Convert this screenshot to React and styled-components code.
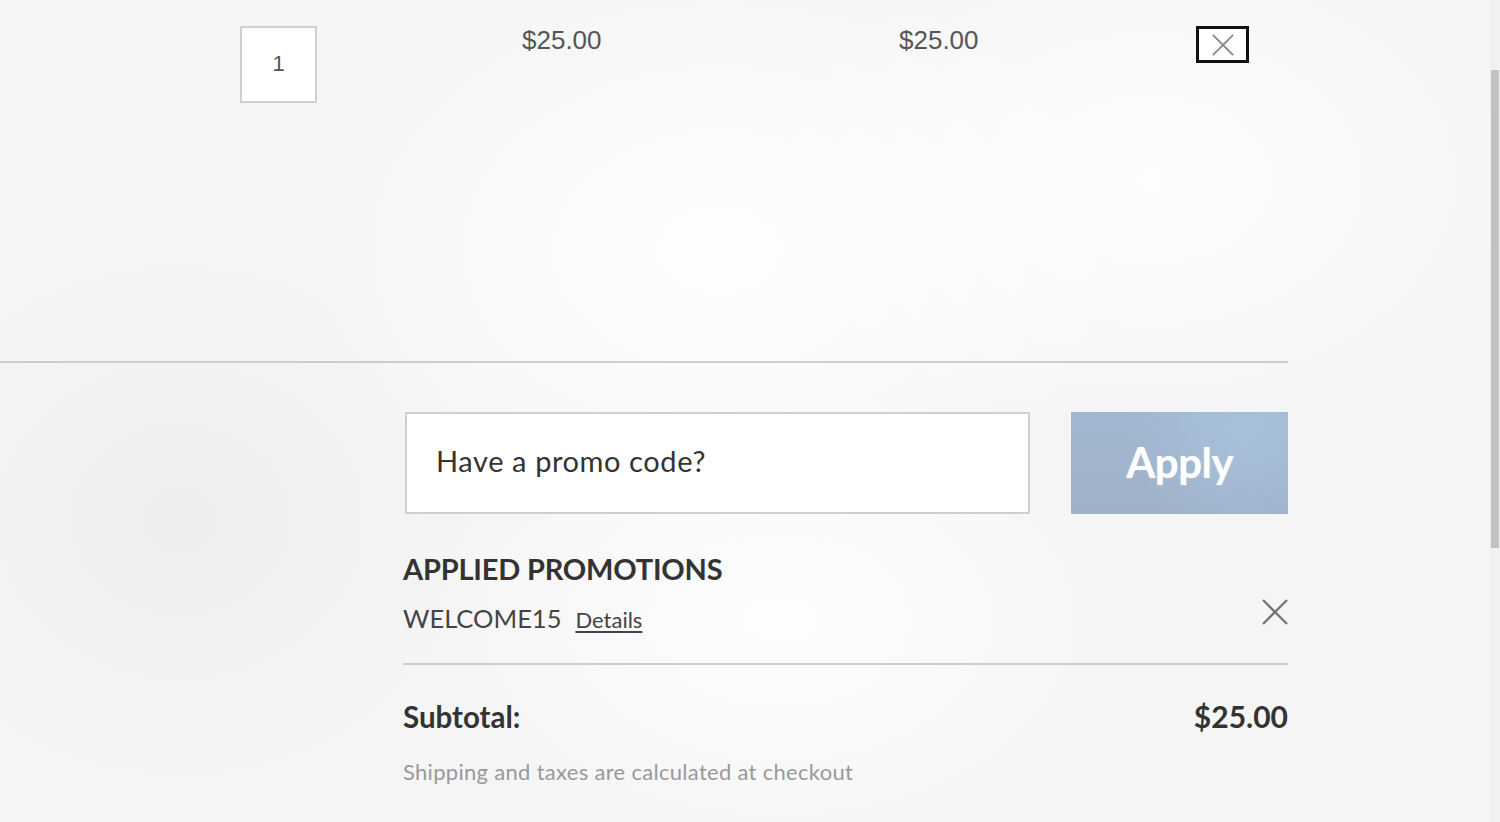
import React from 'react';
import styled, { createGlobalStyle } from 'styled-components';

const GlobalStyle = createGlobalStyle`
  html, body {
    margin: 0;
    padding: 0;
    height: 100%;
    overflow: hidden;
  }
  body {
    font-family: Lato, "Noto Sans", sans-serif;
    color: #333;
  }
`;

const Page = styled.div`
  display: flex;
  width: 1500px;
  height: 822px;
  background:
    radial-gradient(ellipse 420px 300px at 720px 250px, rgba(255,255,255,0.9), transparent),
    radial-gradient(ellipse 380px 260px at 1150px 180px, rgba(255,255,255,0.8), transparent),
    radial-gradient(ellipse 360px 240px at 780px 620px, rgba(255,255,255,0.85), transparent),
    radial-gradient(ellipse 300px 260px at 180px 520px, rgba(236,236,236,0.8), transparent),
    #f5f5f5;
`;

const Main = styled.main`
  flex: 1;
  padding-top: 26px;
`;

const ScrollTrack = styled.div`
  width: 10px;
  background: #f1f1f1;
  padding-top: 70px;
`;

const ScrollThumb = styled.div`
  width: 8px;
  margin-left: 1px;
  height: 478px;
  background: #c1c1c1;
`;

const ItemRow = styled.div`
  display: grid;
  grid-template-columns: 522px 377px 297px 53px;
  align-items: start;
  width: 1288px;
  height: 335px;
  font-family: "Liberation Sans", Arial, sans-serif;
`;

const QtyCell = styled.div`
  padding-left: 240px;
`;

const QtyBox = styled.div`
  width: 73px;
  height: 71px;
  padding-bottom: 2px;
  border: 2px solid #cfcfcf;
  background: #fff;
  display: flex;
  align-items: center;
  justify-content: center;
  font-size: 22px;
  color: #555;
`;

const Price = styled.div`
  font-size: 26px;
  color: #555;
  line-height: 28px;
`;

const RemoveButton = styled.button`
  width: 53px;
  height: 37px;
  border: 3px solid #111;
  background: #fff;
  padding: 0;
  display: flex;
  align-items: center;
  justify-content: center;
`;

const Divider = styled.hr`
  border: none;
  height: 2px;
  background: #cdcdcd;
  margin: 0;
  width: ${p => p.$width}px;
`;

const Summary = styled.section`
  width: 885px;
  margin-left: 403px;
  padding-top: 49px;
`;

const PromoForm = styled.form`
  display: flex;
  gap: 41px;
  margin-left: 2px;
`;

const PromoInput = styled.input`
  width: 626px;
  height: 102px;
  box-sizing: border-box;
  border: 2px solid #cfcfcf;
  background: #fff;
  padding: 0 29px 5px;
  font-family: Lato, "Noto Sans", sans-serif;
  font-size: 29px;
  letter-spacing: 0.6px;
  color: #333;
  outline: none;
  &::placeholder {
    color: #333;
  }
`;

const ApplyButton = styled.button`
  width: 217px;
  height: 102px;
  border: none;
  padding-bottom: 4px;
  background:
    radial-gradient(circle at 80% 20%, rgba(170,200,225,0.6), transparent 60%),
    linear-gradient(180deg, #a2b7cf 0%, #9fb1c9 100%);
  color: #fff;
  font-family: Lato, "Noto Sans", sans-serif;
  font-weight: 700;
  font-size: 42px;
  letter-spacing: -0.5px;
  text-shadow: 0 0 2px rgba(255,255,255,0.4);
`;

const PromoTitle = styled.h3`
  margin: 38px 0 0;
  font-size: 29px;
  font-weight: 700;
  line-height: 34px;
  color: #333;
  letter-spacing: -0.2px;
`;

const PromoLine = styled.div`
  display: flex;
  align-items: center;
  justify-content: space-between;
  margin-top: 17px;
  padding-bottom: 30px;
`;

const PromoCode = styled.div`
  display: flex;
  align-items: baseline;
  gap: 14px;
`;

const CodeName = styled.span`
  font-size: 25.5px;
  color: #444;
`;

const DetailsLink = styled.a`
  font-size: 22px;
  color: #444;
  text-decoration: underline;
  text-underline-offset: 3px;
`;

const IconButton = styled.button`
  border: none;
  background: none;
  padding: 0;
  display: flex;
  margin-top: -12px;
`;

const TotalRow = styled.div`
  display: flex;
  justify-content: space-between;
  align-items: baseline;
  margin-top: 33px;
  font-size: 29.5px;
  font-weight: 700;
  color: #333;
`;

const Total = styled.span`
  font-size: 30px;
`;

const Note = styled.p`
  margin: 24px 0 0;
  font-size: 22px;
  letter-spacing: 0.3px;
  color: #999;
`;

const Cross = ({ size, color, width }) => (
  <svg width={size} height={size} viewBox="0 0 26 26">
    <path d="M1 1 L25 25 M25 1 L1 25" stroke={color} strokeWidth={width} fill="none" />
  </svg>
);

export default function App() {
  return (
    <>
      <GlobalStyle />
      <Page>
        <Main>
          <ItemRow>
            <QtyCell>
              <QtyBox>1</QtyBox>
            </QtyCell>
            <Price>$25.00</Price>
            <Price>$25.00</Price>
            <RemoveButton aria-label="Remove item">
              <Cross size={22} color="#888" width={2.2} />
            </RemoveButton>
          </ItemRow>
          <Divider $width={1288} />
          <Summary>
            <PromoForm onSubmit={e => e.preventDefault()}>
              <PromoInput placeholder="Have a promo code?" />
              <ApplyButton type="submit">Apply</ApplyButton>
            </PromoForm>
            <PromoTitle>APPLIED PROMOTIONS</PromoTitle>
            <PromoLine>
              <PromoCode>
                <CodeName>WELCOME15</CodeName>
                <DetailsLink href="#">Details</DetailsLink>
              </PromoCode>
              <IconButton aria-label="Remove promotion">
                <Cross size={26} color="#777" width={2.4} />
              </IconButton>
            </PromoLine>
            <Divider $width={885} />
            <TotalRow>
              <span>Subtotal:</span>
              <Total>$25.00</Total>
            </TotalRow>
            <Note>Shipping and taxes are calculated at checkout</Note>
          </Summary>
        </Main>
        <ScrollTrack>
          <ScrollThumb />
        </ScrollTrack>
      </Page>
    </>
  );
}
